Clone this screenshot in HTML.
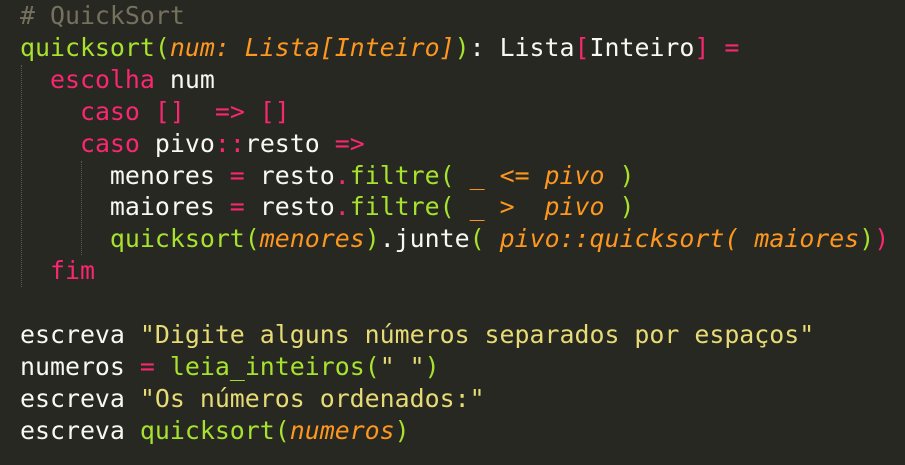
<!DOCTYPE html>
<html><head><meta charset="utf-8"><style>
html,body{margin:0;padding:0;width:905px;height:465px;overflow:hidden;background:#272822;}
pre{margin:0;position:absolute;left:20px;top:0px;font-family:"DejaVu Sans Mono","Liberation Mono",monospace;font-size:24.9px;line-height:31.9px;color:#F8F8F2;white-space:pre;letter-spacing:0;}
.c{color:#75715E}.g{color:#A6E22E}.o{color:#FD971F;font-style:italic}.p{color:#F92672}.y{color:#E6DB74}.yi{color:#E6DB74;font-style:italic}
.guide{position:absolute;width:0;border-left:1px dotted #5a5a50;}
</style></head><body>
<div class="guide" style="left:21px;top:65px;height:222px"></div>
<div class="guide" style="left:81px;top:161px;height:94px"></div>
<pre><span class="c"># QuickSort</span>
<span class="g">quicksort(</span><span class="o">num: Lista[Inteiro]</span><span class="g">)</span>: Lista<span class="p">[</span>Inteiro<span class="p">]</span> <span class="p">=</span>
  <span class="p">escolha</span> num
    <span class="p">caso [] </span> <span class="p">=&gt; []</span>
    <span class="p">caso</span> pivo<span class="p">::</span>resto <span class="p">=&gt;</span>
      menores <span class="p">=</span> resto<span class="p">.</span><span class="g">filtre(</span> <span class="o">_ &lt;= pivo</span> <span class="g">)</span>
      maiores <span class="p">=</span> resto<span class="p">.</span><span class="g">filtre(</span> <span class="o">_ &gt;  pivo</span> <span class="g">)</span>
      <span class="g">quicksort(</span><span class="o">menores</span><span class="g">)</span>.junte<span class="g">(</span> <span class="o">pivo::quicksort( maiores</span><span class="g">)</span><span class="p">)</span>
  <span class="p">fim</span>

escreva <span class="y">"Digite alguns números separados por espaços"</span>
numeros <span class="p">=</span> <span class="g">leia_inteiros(</span><span class="yi">" "</span><span class="g">)</span>
escreva <span class="y">"Os números ordenados:"</span>
escreva <span class="g">quicksort(</span><span class="o">numeros</span><span class="g">)</span></pre>
</body></html>
